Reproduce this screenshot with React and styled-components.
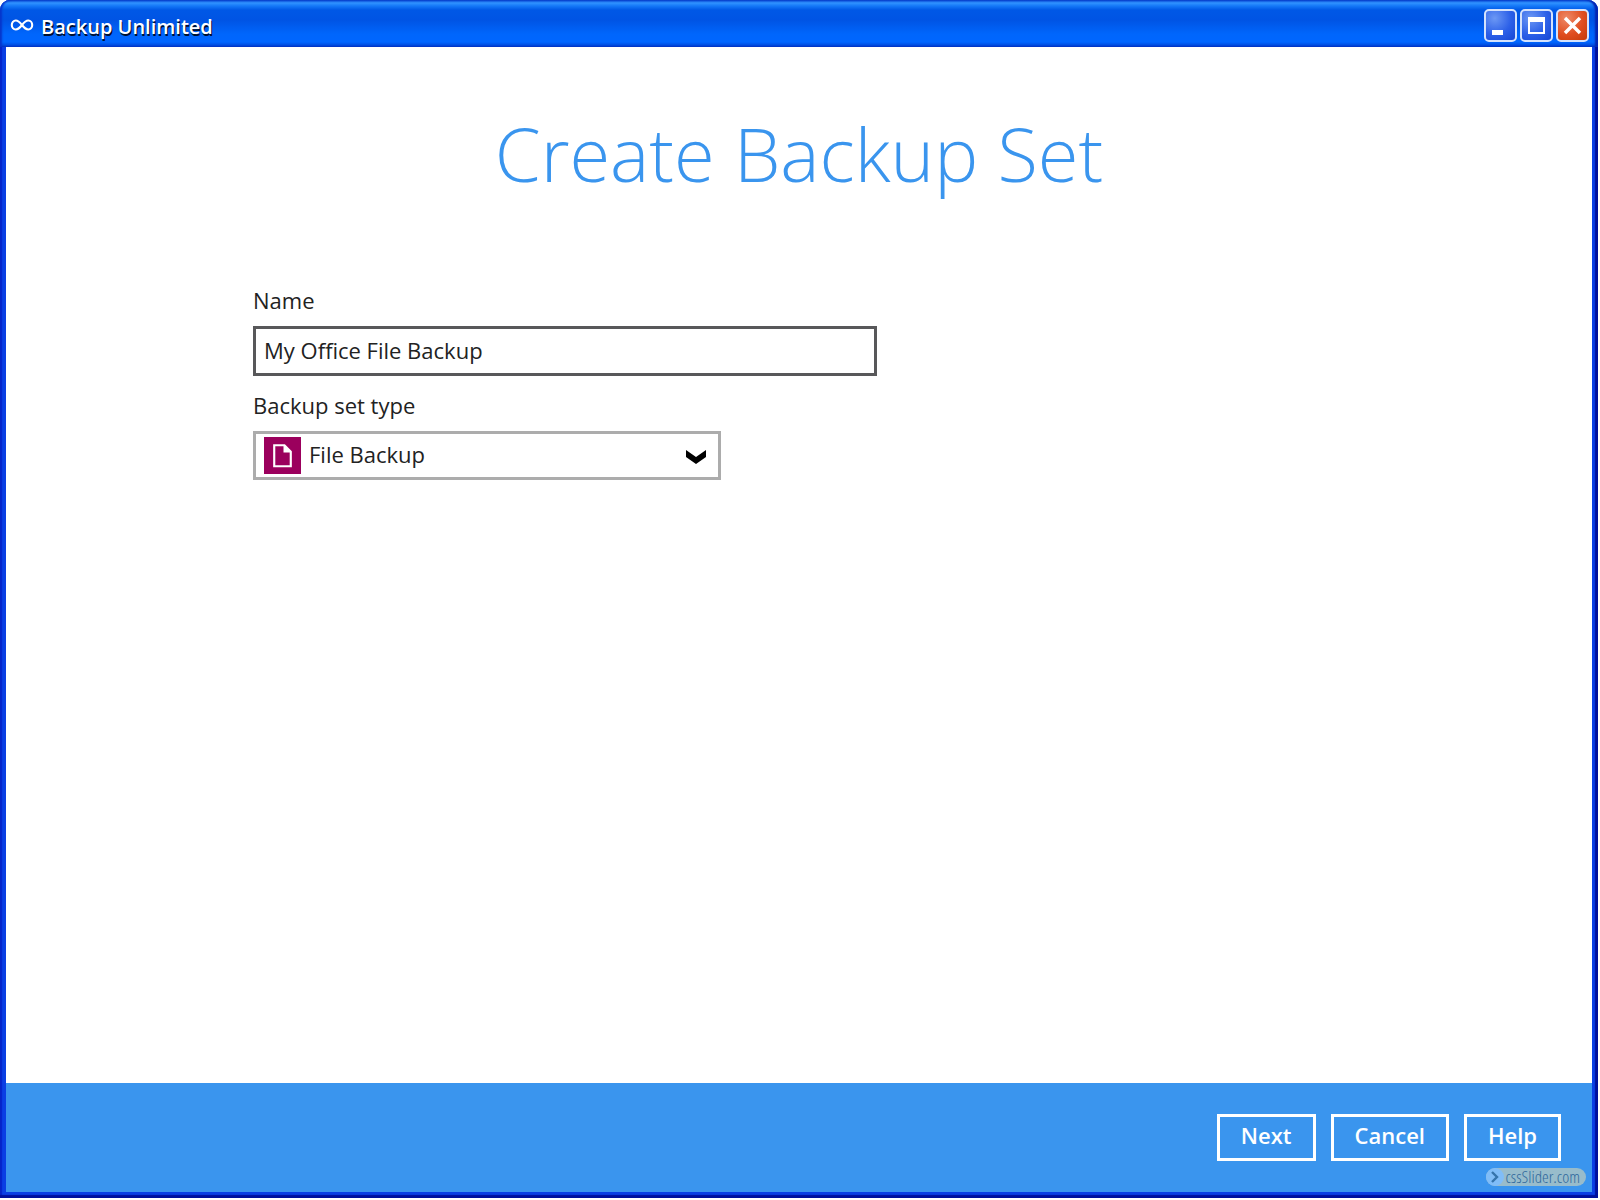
import React, { useState } from 'react';
import styled, { createGlobalStyle } from 'styled-components';

function App() {
    const [name, setName] = useState('My Office File Backup');

    return (
        <>
        <GlobalStyle />
        <Window>
            <TitleBar>
                <InfinityIcon />
                <Title>Backup Unlimited</Title>
                <WindowButton type="button" aria-label="Minimize"><MinimizeIcon /></WindowButton>
                <WindowButton type="button" aria-label="Maximize"><MaximizeIcon /></WindowButton>
                <WindowButton type="button" aria-label="Close" $danger><CloseIcon /></WindowButton>
            </TitleBar>

            <Content>
                <Heading>Create Backup Set</Heading>
                <Form>
                    <Label htmlFor="name">Name</Label>
                    <TextInput id="name" type="text" value={name} onChange={e => setName(e.target.value)} />
                    <Label htmlFor="type">Backup set type</Label>
                    <SelectBox>
                        <FileIcon />
                        <Select id="type" defaultValue="file">
                            <option value="file">File Backup</option>
                        </Select>
                        <ArrowIcon />
                    </SelectBox>
                </Form>
            </Content>

            <Footer>
                <FooterButton type="button">Next</FooterButton>
                <FooterButton type="button">Cancel</FooterButton>
                <FooterButton type="button">Help</FooterButton>
                <Badge href="#">
                    <BadgeDot>
                        <svg width="10" height="12" viewBox="0 0 10 12">
                            <path d="M2 1l5 5-5 5" fill="none" stroke="#3574ac" strokeWidth="2.4" />
                        </svg>
                    </BadgeDot>
                    cssSlider.com
                </Badge>
            </Footer>
        </Window>
        </>
    )
}

const InfinityIcon = () => (
    <svg width="24" height="14" viewBox="0 0 24 14">
        <path
            d="M12 6C9.500 2.800 8 1.500 5.800 1.500 3.400 1.500 1.800 3.500 1.800 6s1.600 4.500 4 4.500C8 10.500 9.500 9.200 12 6s4-4.500 6.200-4.500c2.400 0 4 2 4 4.500s-1.600 4.500-4 4.500C16 10.500 14.500 9.200 12 6z"
            fill="none"
            stroke="#fff"
            strokeWidth="2.1"
        />
    </svg>
)

const MinimizeIcon = () => (
    <svg width="29" height="29" viewBox="0 0 29 29">
        <path d="M6 19h11v5H6z" fill="#fff" />
    </svg>
)

const MaximizeIcon = () => (
    <svg width="29" height="29" viewBox="0 0 29 29">
        <path d="M6 6h17v17H6zM8 11v10h13V11z" fill="#fff" fillRule="evenodd" />
    </svg>
)

const CloseIcon = () => (
    <svg width="29" height="29" viewBox="0 0 29 29">
        <path d="M7 7l15 15M22 7L7 22" stroke="#fff" strokeWidth="3.4" />
    </svg>
)

const FileIcon = () => (
    <svg width="37" height="37" viewBox="0 0 38 38">
        <path d="M0 0h38v38H0z" fill="#9b005d" />
        <path d="M10.500 8.500H21l6.500 6.500V30H10.500z" fill="none" stroke="#fff" strokeWidth="2.200" />
        <path d="M20 8v8h8z" fill="#fff" />
    </svg>
)

const ArrowIcon = () => (
    <svg width="20" height="18" viewBox="0 0 20 18">
        <path d="M0 3l10 7 10-7v7l-10 7L0 10z" fill="#000" />
    </svg>
)

const GlobalStyle = createGlobalStyle`
* {
    box-sizing: border-box;
}

body {
    margin: 0;
    background: #fff;
    color: #222;
    font-family: "Open Sans", sans-serif;
    font-size: 22px;
    line-height: 30px;
}

button, input, select {
    font: inherit;
    color: inherit;
    margin: 0;
}

svg {
    display: block;
    flex: none;
}
`

const Window = styled.div`
    display: flex;
    flex-direction: column;
    min-height: calc(100vh - 2px);
    margin: 0 2px 2px 0;
    padding: 0 6px 6px;
    border-radius: 10px 10px 0 0;
    background: #0a3fe4;
    box-shadow: inset -3px -3px 1px #00109c, inset 2px 0 1px #0524c8;
`

const TitleBar = styled.header`
    display: flex;
    align-items: center;
    gap: 3px;
    height: 47px;
    margin: 0 -6px;
    padding: 4px 9px 0 10px;
    border-radius: 10px 10px 0 0;
    background: linear-gradient(#0a50d8 0, #3092ff 3px, #1478f8 6px, #0058e6 10px, #0054e4 20px, #0066fc 34px, #0066ff 42px, #0046d8 46px, #003cc8 47px);
    box-shadow: inset 2px 0 2px #0636cc, inset -3px 0 2px #0524b0;
`

const Title = styled.div`
    flex: 1;
    padding: 2px 0 0 4px;
    font-size: 20px;
    font-weight: 600;
    color: #fff;
    text-shadow: 1px 2px 0 #001030;
`

const WindowButton = styled.button`
    display: flex;
    align-items: center;
    justify-content: center;
    width: 33px;
    height: 33px;
    padding: 0;
    border: 2px solid #d4e2fc;
    border-radius: 5px;
    background: ${props => props.$danger
        ? 'radial-gradient(circle at 30% 25%, #ee8a68, #e04e20 55%, #c43a08)'
        : 'radial-gradient(circle at 30% 25%, #6c98f4, #2c60e8 55%, #1646d4)'};
`

const Content = styled.main`
    flex: 1;
    background: #fff;
`

const Heading = styled.h1`
    margin: 0;
    padding: 57px 0 73px;
    font-size: 74px;
    font-weight: 300;
    line-height: 100px;
    text-align: center;
    color: #3a95ee;
`

const Form = styled.form`
    display: flex;
    flex-direction: column;
    width: 624px;
    max-width: 100%;
    margin-left: 247px;
`

const Label = styled.label`
    padding: 8px 0 11px;
`

const TextInput = styled.input`
    height: 50px;
    margin-bottom: 6px;
    padding: 0 8px 2px;
    border: 3px solid #58585a;
    background: #fff;
    outline: none;
`

const SelectBox = styled.div`
    display: flex;
    align-items: center;
    width: 468px;
    height: 49px;
    padding: 0 12px 0 8px;
    border: 3px solid #acacac;
`

const Select = styled.select`
    flex: 1;
    padding: 0 0 4px 8px;
    border: 0;
    background: transparent;
    appearance: none;
    outline: none;
`

const Footer = styled.footer`
    position: relative;
    display: flex;
    justify-content: flex-end;
    gap: 15px;
    padding: 31px 31px;
    background: #3a95ee;
`

const FooterButton = styled.button`
    height: 47px;
    padding: 0 21px 5px;
    border: 3px solid #fff;
    background: transparent;
    color: #fff;
    font-weight: 600;
`

const Badge = styled.a`
    position: absolute;
    right: 6px;
    bottom: 6px;
    display: flex;
    align-items: center;
    gap: 2px;
    height: 18px;
    padding-right: 6px;
    border-radius: 9px;
    background: #98bccb;
    color: #30699c;
    font-family: "Open Sans Condensed Light", "Open Sans Condensed", "Liberation Sans Narrow", sans-serif;
    font-size: 17px;
    font-weight: 300;
    line-height: 18px;
    text-decoration: none;
`

const BadgeDot = styled.span`
    display: flex;
    align-items: center;
    justify-content: center;
    width: 18px;
    height: 18px;
    border-radius: 50%;
    background: #80bdf8;
`

export default App
